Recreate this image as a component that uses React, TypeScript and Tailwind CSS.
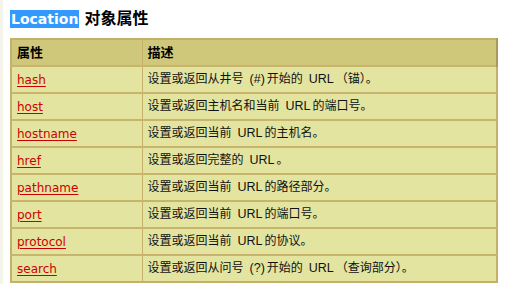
import React from "react";

function L({ children }: { children: React.ReactNode }) {
  return (
    <span
      className="ml-[6px] mr-[2px] text-[12.5px]"
      style={{ fontFamily: '"Liberation Sans", Arial, sans-serif' }}
    >
      {children}
    </span>
  );
}

const rows: [string, React.ReactNode][] = [
  ["hash", <>设置或返回从井号<L>(#)</L>开始的<L>URL</L>（锚）。</>],
  ["host", <>设置或返回主机名和当前<L>URL</L>的端口号。</>],
  ["hostname", <>设置或返回当前<L>URL</L>的主机名。</>],
  ["href", <>设置或返回完整的<L>URL</L>。</>],
  ["pathname", <>设置或返回当前<L>URL</L>的路径部分。</>],
  ["port", <>设置或返回当前<L>URL</L>的端口号。</>],
  ["protocol", <>设置或返回当前<L>URL</L>的协议。</>],
  ["search", <>设置或返回从问号<L>(?)</L>开始的<L>URL</L>（查询部分）。</>],
];

const font = {
  fontFamily: '"DejaVu Sans", "Noto Sans CJK SC", sans-serif',
};

export default function App() {
  return (
    <div
      className="w-[506px] h-[284px] overflow-hidden bg-white flex"
      style={font}
    >
      <div className="w-[3px] bg-[#f4f4ea] shrink-0" />
      <div className="pl-[7px] pt-[10px] flex flex-col">
        <div className="h-[18px] flex items-center font-bold text-black">
          <span className="bg-[#3399ff] text-white text-[14px] leading-[18px] px-[1px]">
            Location
          </span>
          <span className="ml-[5px] text-[16px] leading-[18px]">对象属性</span>
        </div>
        <table className="mt-[10px] w-[488px] border-collapse border-2 border-[#c4b06a] text-[12px] text-black">
          <thead>
            <tr className="h-[27px] bg-[#cfc87a]">
              <th className="w-[131px] text-left font-bold text-[13px] px-[5px] border-r border-[#c4b06a]">
                属性
              </th>
              <th className="text-left font-bold text-[13px] px-[5px] border-r-2 border-r-[#a89a5c]">
                描述
              </th>
            </tr>
          </thead>
          <tbody>
            {rows.map(([name, desc]) => (
              <tr
                key={name}
                className="h-[27px] bg-[#e3e4a0] border-t-2 border-[#c8b46c]"
              >
                <td className="px-[5px] border-r border-[#c4b06a]">
                  <a className="text-[#cc0000] underline underline-offset-2" href="#">
                    {name}
                  </a>
                </td>
                <td className="px-[5px] text-[#111]">{desc}</td>
              </tr>
            ))}
          </tbody>
        </table>
      </div>
    </div>
  );
}
